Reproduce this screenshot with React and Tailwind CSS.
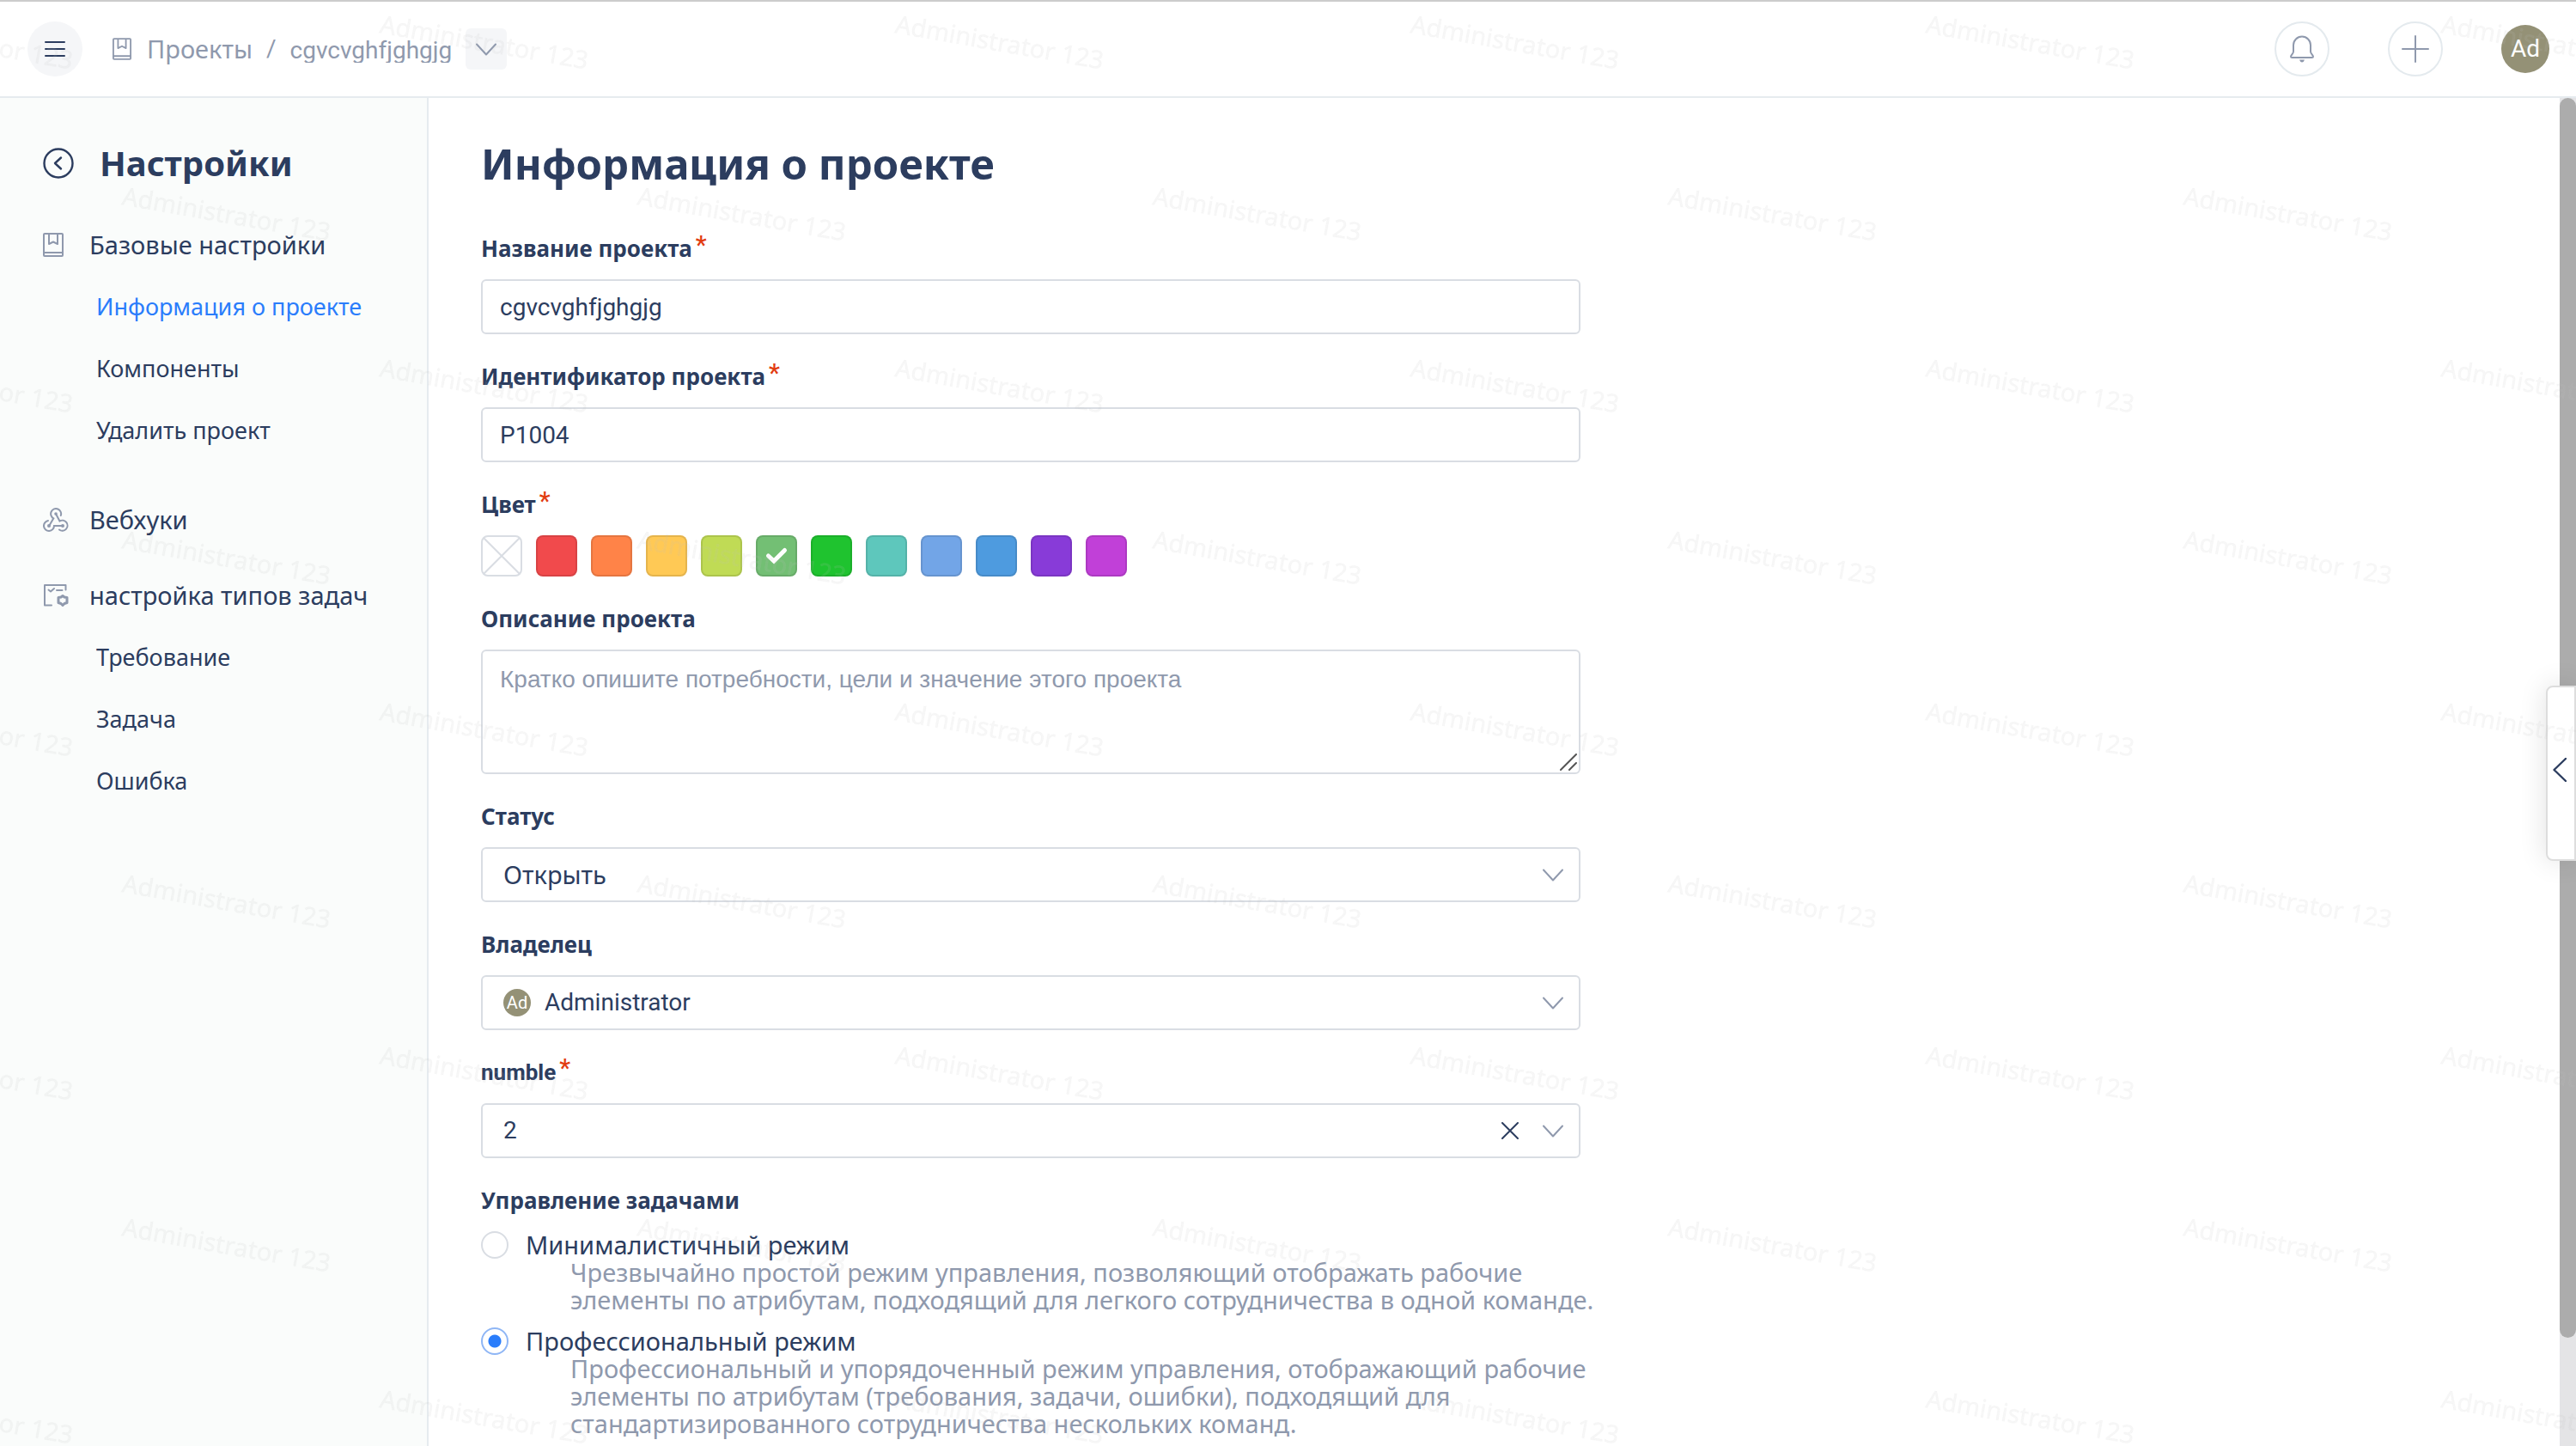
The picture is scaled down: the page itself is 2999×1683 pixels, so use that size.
const SWATCHES = [
  ['Красный', 'bg-[#f14a4c]'],
  ['Оранжевый', 'bg-[#ff8348]'],
  ['Жёлтый', 'bg-[#ffc955]'],
  ['Лаймовый', 'bg-[#c0db55]'],
  ['Зелёный', 'bg-[#73bf74]'],
  ['Ярко-зелёный', 'bg-[#1fc32f]'],
  ['Бирюзовый', 'bg-[#5ec7bc]'],
  ['Голубой', 'bg-[#72a5e7]'],
  ['Синий', 'bg-[#4e9bdf]'],
  ['Фиолетовый', 'bg-[#883bd8]'],
  ['Пурпурный', 'bg-[#c140d8]'],
];

function BookIcon({ className }) {
  return (
    <svg viewBox="0 0 24 28" fill="none" stroke="currentColor" strokeWidth="2" strokeLinejoin="round" className={className} aria-hidden="true">
      <rect x="1" y="1" width="22" height="26" rx="1" />
      <path d="M1 23H23M7 1V13L12 10.500L17 13V1" />
    </svg>
  );
}

function ChevronDown({ className }) {
  return (
    <svg viewBox="0 0 24 14" fill="none" stroke="currentColor" strokeWidth="2" strokeLinecap="round" strokeLinejoin="round" className={className} aria-hidden="true">
      <path d="M1 1L12 13L23 1" />
    </svg>
  );
}

function WebhookIcon() {
  return (
    <svg viewBox="0 0 30 28" fill="none" stroke="currentColor" strokeWidth="2" strokeLinecap="round" className="h-7 w-[30px]" aria-hidden="true">
      <path d="M20.800 9A6 6 0 1 0 12.300 12.300L7.500 20.500" />
      <path d="M6 15A6 6 0 1 0 13 21H23" />
      <path d="M15 7L19.500 15.500A6 6 0 1 1 19 25.500" />
      <circle cx="15" cy="7" r="1.800" fill="currentColor" stroke="none" />
      <circle cx="7" cy="21" r="2" fill="currentColor" stroke="none" />
      <circle cx="23" cy="21" r="2" fill="currentColor" stroke="none" />
    </svg>
  );
}

function TaskTypeIcon() {
  return (
    <svg viewBox="0 0 30 28" fill="none" stroke="currentColor" strokeWidth="2" strokeLinecap="round" strokeLinejoin="round" className="h-7 w-[30px]" aria-hidden="true">
      <path d="M10 25.500H2V2H26.500V7.500" />
      <path d="M6.500 7.500L9 9.500L13 6M16 8H22.500" />
      <path d="M23 14.500L25 16L28 16.500V22.500L25 23.500L23 25.500L21 23.500L18 22.500V16.500L21 16Z" strokeWidth="3" />
    </svg>
  );
}

function NavSection({ icon, children }) {
  return (
    <a href="#" className="flex h-[72px] items-center gap-6 pl-[50px] text-[29px]">
      <span className="flex w-[30px] text-[#8f99ad]">{icon}</span>
      <span>{children}</span>
    </a>
  );
}

function NavItem({ active, children }) {
  return (
    <a href="#" aria-current={active ? 'page' : undefined} className={`flex h-[72px] items-center pl-[112px] text-[27px] ${active ? 'text-[#2a7dfb]' : ''}`}>
      {children}
    </a>
  );
}

function Star() {
  return <span className="pl-1 align-[4px] font-['Roboto',sans-serif] text-[29px] leading-none font-medium text-[#e23c11]">*</span>;
}

const labelClass = 'mb-[14px] block h-11 text-[26px] leading-11 font-bold';
const boxClass = 'h-16 w-full rounded-md border-2 border-[#d9dde3] bg-white';
const roboto = "font-['Roboto','Noto_Sans',sans-serif] text-[28px]";
const robotoFamily = "font-['Roboto','Noto_Sans',sans-serif]";

function Field({ id, label, required, labelFont = '', children }) {
  return (
    <div>
      <label htmlFor={id} className={`${labelClass} ${labelFont}`}>
        {label}
        {required && <Star />}
      </label>
      {children}
    </div>
  );
}

function SelectBox({ id, options, padding = 'pl-6', font = 'text-[29px]', before, clear }) {
  return (
    <div className="relative">
      <select id={id} className={`${boxClass} ${padding} ${font} appearance-none pr-28`}>
        {options.map((o) => (
          <option key={o}>{o}</option>
        ))}
      </select>
      {before}
      <div className="pointer-events-none absolute inset-y-0 right-5 flex items-center gap-7">
        {clear && (
          <button type="button" aria-label="Очистить" className="pointer-events-auto">
            <svg viewBox="0 0 20 20" fill="none" stroke="#2c3d5f" strokeWidth="2" strokeLinecap="round" className="size-5">
              <path d="M1 1L19 19M19 1L1 19" />
            </svg>
          </button>
        )}
        <ChevronDown className="h-[15px] w-6 text-[#8f99ad]" />
      </div>
    </div>
  );
}

function ModeOption({ title, checked, children }) {
  return (
    <label className="block text-[29px] leading-8">
      <span className="flex items-center gap-5">
        <input
          type="radio"
          name="mode"
          defaultChecked={checked}
          className="size-8 shrink-0 appearance-none rounded-full border-2 border-[#d9dde3] bg-white checked:border-[#8fb6f5] checked:bg-[radial-gradient(circle,#2a7dfb_7px,#fff_8px)]"
        />
        <span>{title}</span>
      </span>
      <span className="-mr-4 block pl-[104px] text-[#8f99ad]">{children}</span>
    </label>
  );
}

function Watermark() {
  return (
    <svg className="pointer-events-none fixed inset-0 z-50 h-full w-full" aria-hidden="true">
      <defs>
        <pattern id="wm" x="140" y="0" width="600" height="400" patternUnits="userSpaceOnUse">
          <g fill="#bebebe" fillOpacity="0.12" stroke="#bebebe" strokeOpacity="0.05" fontFamily="Noto Sans, sans-serif" fontSize="29">
            <text transform="translate(301 38) rotate(10)">Administrator 123</text>
            <text transform="translate(1 238) rotate(10)">Administrator 123</text>
          </g>
        </pattern>
      </defs>
      <rect width="100%" height="100%" fill="url(#wm)" />
    </svg>
  );
}

export default function App() {
  return (
    <div className="flex h-screen flex-col overflow-hidden bg-white font-['Noto_Sans',sans-serif] text-[#2c3d5f]">
      <header className="flex h-[114px] shrink-0 items-center justify-between border-t-2 border-b-2 border-t-[#cccccc] border-b-[#e6ebef] pr-[31px] pl-8">
        <div className="flex items-center text-[29px] text-[#8f99ad]">
          <button type="button" aria-label="Меню" className="flex size-16 items-center justify-center rounded-full bg-[#f5f6f8] text-[#2c3d5f]">
            <svg viewBox="0 0 24 24" stroke="currentColor" strokeWidth="2" strokeLinecap="round" className="size-6">
              <path d="M1 4H23M1 12H23M1 20H23" />
            </svg>
          </button>
          <nav aria-label="Путь" className="flex items-center pl-[35px]">
            <BookIcon className="h-[26px] w-[22px]" />
            <a href="#" className="pl-[18px]">Проекты</a>
            <span className={`px-4 ${roboto}`}>/</span>
            <a href="#" className={`h-8 overflow-hidden ${roboto} leading-9`}>cgvcvghfjghgjg</a>
          </nav>
          <button type="button" aria-label="Выбрать проект" className="ml-4 flex size-12 items-center justify-center rounded-md bg-[#f5f6f8]">
            <ChevronDown className="h-[15px] w-6" />
          </button>
        </div>
        <div className="flex items-center gap-[68px] text-[#8f99ad]">
          <button type="button" aria-label="Уведомления" className="flex size-16 items-center justify-center rounded-full border-2 border-[#e4eaee]">
            <svg viewBox="0 0 28 32" fill="none" stroke="currentColor" strokeWidth="2" strokeLinejoin="round" className="h-8 w-7" aria-hidden="true">
              <path d="M4 19V11.500A10 10 0 0 1 24 11.500V19C24 21.500 27 23 27 25Q27 26 25.500 26H2.500Q1 26 1 25C1 23 4 21.500 4 19Z" />
              <path d="M11 28.500H17Q16 31.500 14 31.500Q12 31.500 11 28.500Z" fill="currentColor" stroke="none" />
            </svg>
          </button>
          <button type="button" aria-label="Создать" className="flex size-16 items-center justify-center rounded-full border-2 border-[#e4eaee]">
            <svg viewBox="0 0 32 32" stroke="currentColor" strokeWidth="2" strokeLinecap="round" className="size-8" aria-hidden="true">
              <path d="M16 1V31M1 16H31" />
            </svg>
          </button>
          <button type="button" className={`flex size-14 items-center justify-center rounded-full bg-[#949176] text-white ${roboto}`}>Ad</button>
        </div>
      </header>

      <div className="flex min-h-0 flex-1">
        <aside className="w-[499px] shrink-0 border-r-2 border-[#e6ebef] bg-[#fafcfb]">
          <div className="flex h-[135px] items-center gap-[30px] pt-4 pl-[50px]">
            <button type="button" aria-label="Назад">
              <svg viewBox="0 0 36 36" fill="none" stroke="currentColor" strokeWidth="2.400" strokeLinecap="round" strokeLinejoin="round" className="size-9">
                <circle cx="18" cy="18" r="16.500" />
                <path d="M21 11.500L14 18L21 24.500" />
              </svg>
            </button>
            <h2 className="text-[40px] leading-[60px] font-bold">Настройки</h2>
          </div>
          <nav aria-label="Настройки">
            <NavSection icon={<BookIcon className="h-7 w-6" />}>Базовые настройки</NavSection>
            <NavItem active>Информация о проекте</NavItem>
            <NavItem>Компоненты</NavItem>
            <NavItem>Удалить проект</NavItem>
            <div className="pt-8 pb-4">
              <NavSection icon={<WebhookIcon />}>Вебхуки</NavSection>
            </div>
            <NavSection icon={<TaskTypeIcon />}>настройка типов задач</NavSection>
            <NavItem>Требование</NavItem>
            <NavItem>Задача</NavItem>
            <NavItem>Ошибка</NavItem>
          </nav>
        </aside>

        <main className="min-w-0 flex-1 overflow-hidden pr-[60px] pl-[61px]">
          <h1 className="pt-10 text-[49px] leading-[72px] font-bold">Информация о проекте</h1>
          <form className="flex max-w-[1280px] flex-col gap-[27px] pt-[41px]">
            <Field id="name" label="Название проекта" required>
              <input id="name" defaultValue="cgvcvghfjghgjg" className={`${boxClass} ${roboto} px-5`} />
            </Field>
            <Field id="code" label="Идентификатор проекта" required>
              <input id="code" defaultValue="P1004" className={`${boxClass} ${roboto} px-5`} />
            </Field>
            <fieldset>
              <legend className={labelClass}>
                Цвет
                <Star />
              </legend>
              <div className="flex gap-4">
                <button type="button" aria-label="Без цвета" className="size-12 rounded-lg border-2 border-[#d9dde3]">
                  <svg viewBox="0 0 44 44" stroke="#d9dde3" strokeWidth="2" className="size-11" aria-hidden="true">
                    <path d="M1 1L43 43M43 1L1 43" />
                  </svg>
                </button>
                {SWATCHES.map(([name, color]) => (
                  <button key={name} type="button" aria-label={name} className={`flex size-12 items-center justify-center rounded-lg border-2 border-black/10 ${color}`}>
                    {name === 'Зелёный' && (
                      <svg viewBox="0 0 28 22" fill="none" stroke="#fff" strokeWidth="5" className="h-[22px] w-7" strokeLinecap="round" strokeLinejoin="miter" aria-hidden="true">
                        <path d="M4.500 11L11 17L23.500 4.500" />
                      </svg>
                    )}
                  </button>
                ))}
              </div>
            </fieldset>
            <Field id="about" label="Описание проекта">
              <div className="relative">
                <textarea
                  id="about"
                  placeholder="Кратко опишите потребности, цели и значение этого проекта"
                  className="block h-[145px] w-full resize-none rounded-md border-2 border-[#d9dde3] bg-white px-5 py-3 font-['Liberation_Sans',sans-serif] text-[28px] leading-[42px] placeholder:text-[#8f99ad]"
                />
                <svg viewBox="0 0 20 20" stroke="#555" strokeWidth="2" strokeLinecap="round" className="pointer-events-none absolute right-1 bottom-1 size-5" aria-hidden="true">
                  <path d="M1 19L19 1M11 19L19 11" />
                </svg>
              </div>
            </Field>
            <Field id="status" label="Статус">
              <SelectBox id="status" options={['Открыть']} />
            </Field>
            <Field id="owner" label="Владелец">
              <SelectBox
                id="owner"
                options={['Administrator']}
                padding="pl-18"
                font={roboto}
                before={
                  <span aria-hidden="true" className={`pointer-events-none absolute top-4 left-[26px] flex size-8 items-center justify-center rounded-full bg-[#949176] text-[20px] text-white ${robotoFamily}`}>
                    Ad
                  </span>
                }
              />
            </Field>
            <Field id="numble" label="numble" labelFont={robotoFamily} required>
              <SelectBox id="numble" options={['2']} font={roboto} clear />
            </Field>
            <fieldset>
              <legend className={labelClass}>Управление задачами</legend>
              <div className="flex flex-col gap-4">
                <ModeOption title="Минималистичный режим">
                  Чрезвычайно простой режим управления, позволяющий отображать рабочие элементы по атрибутам, подходящий для легкого сотрудничества в одной команде.
                </ModeOption>
                <ModeOption title="Профессиональный режим" checked>
                  Профессиональный и упорядоченный режим управления, отображающий рабочие элементы по атрибутам (требования, задачи, ошибки), подходящий для стандартизированного сотрудничества нескольких команд.
                </ModeOption>
              </div>
            </fieldset>
          </form>
        </main>

        <div aria-hidden="true" className="w-[19px] shrink-0 bg-[#e4e4e6]">
          <div className="h-[92%] rounded-full bg-[#acacac]" />
        </div>
      </div>

      <button type="button" aria-label="Открыть панель" className="fixed top-[798px] right-0 flex h-[204px] w-[35px] items-center justify-center rounded-l-lg border-2 border-[#dddddd] bg-white pr-1 pb-2 shadow-[0_0_32px_rgba(0,0,0,0.12)]">
        <svg viewBox="0 0 16 28" fill="none" stroke="currentColor" strokeWidth="2.400" strokeLinecap="round" strokeLinejoin="round" className="h-7 w-4">
          <path d="M15 1L1.500 14L15 27" />
        </svg>
      </button>
      <Watermark />
    </div>
  );
}
